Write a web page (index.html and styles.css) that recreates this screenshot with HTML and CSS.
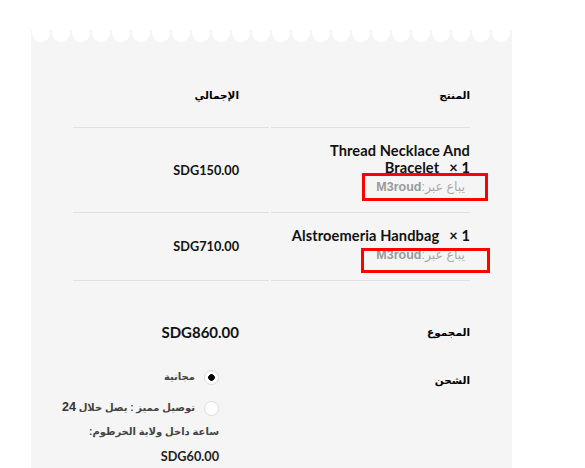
FILE: index.html
```html
<!DOCTYPE html>
<html lang="ar">
<head>
<meta charset="utf-8">
<title>Order review</title>
<link rel="stylesheet" href="styles.css">
</head>
<body>
<div class="panel" dir="rtl">
  <div class="order-table">
    <div class="cell th name-col">المنتج</div>
    <div class="cell th total-col">الإجمالي</div>

    <div class="cell item name-col">
      <div class="item-name" dir="ltr">Thread Necklace And Bracelet<span class="qty">×&nbsp;1</span></div>
      <div class="sold-by"><span class="sold-label">يباع عبر:</span><span class="vendor">M3roud</span><span class="mark mark-1"></span></div>
    </div>
    <div class="cell item total-col price">SDG150.00</div>

    <div class="cell item name-col">
      <div class="item-name" dir="ltr">Alstroemeria Handbag<span class="qty">×&nbsp;1</span></div>
      <div class="sold-by"><span class="sold-label">يباع عبر:</span><span class="vendor">M3roud</span><span class="mark mark-2"></span></div>
    </div>
    <div class="cell item total-col price">SDG710.00</div>
  </div>

  <div class="totals">
    <div class="tcell name-col sub-label">المجموع</div>
    <div class="tcell total-col sub-amount">SDG860.00</div>

    <div class="tcell name-col ship-label">الشحن</div>
    <div class="tcell total-col">
      <ul class="ship-methods">
        <li><span class="radio checked"></span><span class="ship-text">مجانية</span></li>
        <li><span class="radio"></span><span class="ship-text">توصيل مميز : يصل خلال <b>24</b> ساعة داخل ولاية الخرطوم: <span class="ship-price">SDG60.00</span></span></li>
      </ul>
    </div>
  </div>
</div>
</body>
</html>
```

FILE: styles.css
```css
html, body {
  margin: 0;
  padding: 0;
  background: #ffffff;
}

body {
  font-family: Lato, "DejaVu Sans", sans-serif;
  color: #111;
}

.panel {
  width: 481px;
  margin: 30px 0 0 31px;
  padding: 33px 42px 40px;
  box-sizing: border-box;
  min-height: 460px;
  background:
    radial-gradient(circle at 10px 3px, #ffffff 8.5px, rgba(255,255,255,0) 9.2px) top left / 20px 12px repeat-x,
    #f5f5f5;
}

.order-table,
.totals {
  display: grid;
  grid-template-columns: 199px 196px;
  column-gap: 2px;
}

.cell {
  border-bottom: 1px solid #e0e0e0;
}

.total-col {
  padding-right: 30px;
}

.th {
  padding-top: 23px;
  padding-bottom: 23px;
  line-height: 18px;
  font-family: "DejaVu Sans", sans-serif;
  font-weight: bold;
  font-size: 10.5px;
  color: #000;
}

.item {
  padding-top: 14px;
  padding-bottom: 15px;
}

.item-name {
  text-align: right;
  font-family: Lato, sans-serif;
  font-weight: 700;
  font-size: 14.6px;
  letter-spacing: 0.1px;
  line-height: 17px;
  color: #111;
}

.qty {
  margin-left: 10px;
}

.sold-by {
  position: relative;
  margin-top: 2px;
  margin-right: 5px;
  line-height: 19px;
  font-family: "Liberation Sans", "DejaVu Sans", sans-serif;
  font-size: 12.5px;
  color: #aaa;
}

.vendor {
  font-weight: bold;
  color: #9a9a9a;
}

.mark {
  position: absolute;
  border: 3px solid #ff0000;
  box-sizing: border-box;
}

.mark-1 {
  left: 91px;
  top: -5px;
  width: 126px;
  height: 28px;
}

.mark-2 {
  left: 90px;
  top: 2px;
  width: 129px;
  height: 25px;
}

.price {
  display: flex;
  align-items: center;
  font-family: Lato, sans-serif;
  font-weight: 700;
  font-size: 12.7px;
  color: #111;
}

.sub-label,
.sub-amount {
  padding-top: 41px;
  line-height: 20px;
}

.sub-label,
.ship-label {
  font-family: "DejaVu Sans", sans-serif;
  font-weight: bold;
  font-size: 10.5px;
  color: #000;
}

.sub-amount {
  font-family: Lato, sans-serif;
  font-weight: 700;
  font-size: 15px;
  color: #111;
}

.ship-label {
  padding-top: 28px;
  line-height: 20px;
}

.ship-methods {
  list-style: none;
  margin: 0 20px 0 0;
  padding: 23px 0 0;
  width: 166px;
}

.ship-methods li {
  line-height: 24px;
  margin-bottom: 6px;
  font-family: "Liberation Sans", "DejaVu Sans", sans-serif;
  font-size: 10px;
  font-weight: bold;
  color: #444;
}

.radio {
  display: inline-block;
  width: 15px;
  height: 15px;
  margin-left: 9px;
  border: 1px solid #dcdcdc;
  border-radius: 50%;
  box-sizing: border-box;
  background: #ffffff;
  vertical-align: middle;
}

.radio.checked {
  background: radial-gradient(circle, #000 3px, #ffffff 3.6px);
}

.ship-text b {
  font-size: 12.5px;
  color: #333;
}

.ship-price {
  font-family: Lato, sans-serif;
  font-weight: 700;
  font-size: 12.7px;
  color: #222;
}
```
